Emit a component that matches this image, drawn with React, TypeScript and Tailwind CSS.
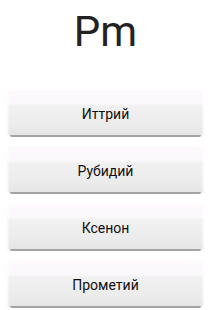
const elements = ["Иттрий", "Рубидий", "Ксенон", "Прометий"];

function ElementButton({ label }: { label: string }) {
    return (
        <button className="relative w-full h-[48px] flex items-center justify-center cursor-pointer">
            {/* soft holo-style body */}
            <span className="absolute left-[1px] right-[1px] top-0 bottom-[2px] blur-[1px] bg-[linear-gradient(to_bottom,#fdf9fd_0%,#fcf9fc_30%,#f2f1f2_34%,#ebebeb_80%,#e3e3e3_100%)]" />
            <span className="absolute left-[3px] right-[3px] bottom-[1px] h-[2px] rounded-b-[2px] bg-[#a3a3a3] blur-[0.6px]" />
            <span className="relative text-[14px] leading-[18px] text-[#111]">{label}</span>
        </button>
    );
}

export default function App() {
    return (
        <div className="w-[211px] h-[310px] bg-white overflow-hidden font-['Roboto','Liberation_Sans',sans-serif]">
            <div className="flex justify-center pt-[8px] h-[90px]">
                <span className="text-[42px] leading-[48px] text-[#222]">Pm</span>
            </div>
            <div className="flex flex-col gap-[9px] px-[7px]">
                {elements.map((el) => (
                    <ElementButton key={el} label={el} />
                ))}
            </div>
        </div>
    );
}
